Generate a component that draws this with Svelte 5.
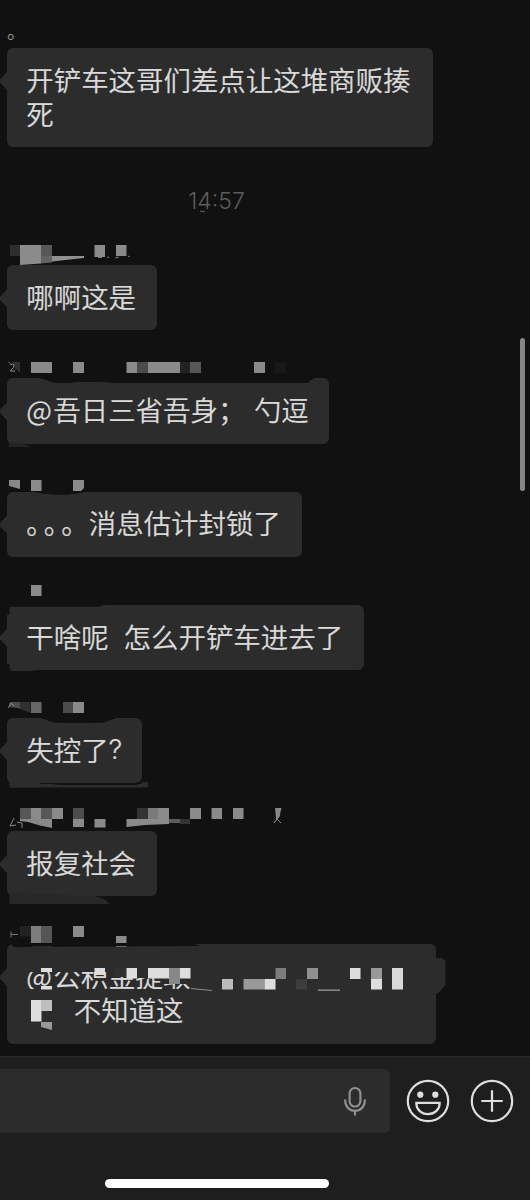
<script>
    const BG = '#111111';
    const BUBBLE = '#2c2c2c';

    // blocks: [x, y, width, height, color], shapes: [points, color], strokes: [path, color]
    // x is measured from the screen edge, y from the top of the bubble
    const messages = [
        {
            width: 426,
            gap: 0,
            lines: [[{ text: '开铲车这哥们差点让这堆商贩揍' }], [{ text: '死' }]],
        },
        {
            width: 150,
            gap: 53,
            lines: [[{ text: '哪啊这是' }]],
            blocks: [
                [10, -20, 10, 11, '#2e2e2e'],
                [41, -20, 11, 11, '#575757'],
                [94.5, -20, 10.5, 12, '#8a8a8a'],
                [116, -20, 10.5, 11, '#8a8a8a'],
            ],
            shapes: [
                ['20,-20 41,-20 41,-1.5 20,0', '#8b8b8b'],
                ['41,-9 52,-9 52,-2.5 41,-1.5', '#636363'],
                ['52,-9 84,-9 84,-7 52,-3.5', '#909090'],
            ],
            strokes: [['M98 -7.5h4M107 -8l2 .5M115 -7l4 -1M128 -9l2 1', '#777']],
        },
        {
            width: 322,
            gap: 48,
            lines: [[{ text: '@', width: 27 }, { text: '吾日三省吾身' }, { text: '；', width: 36 }, { text: '勺逗' }]],
            blocks: [
                [31, -16, 21, 11, '#8a8a8a'],
                [73, -16, 11, 11, '#8a8a8a'],
                [126.5, -16, 10.5, 11, '#8a8a8a'],
                [137, -16, 11, 11, '#4b4b4b'],
                [148, -16, 32, 11, '#8a8a8a'],
                [180, -16, 10, 11, '#222222'],
                [190, -16, 11, 11, '#575757'],
                [254, -16, 11, 11, '#8a8a8a'],
                [275, -16, 11, 11, '#181818'],
            ],
            shapes: [
                ['12,-16 20,-16 20,-5 14,-11', '#303030'],
                ['40,0 45,1.5 53,4.5 65,5 76,4 100,3.5 117,5 307,5 314,0 314,-1 40,-1', BG],
                ['9,64 24,66 31,69 9,69', '#242424'],
            ],
            strokes: [['M8.5 -16l2 1.5M10 -13q3 -2 4 0t-4 6h5', '#888']],
        },
        {
            width: 295,
            gap: 48,
            lines: [[
                { text: '。', width: 17.5, half: true },
                { text: '。', width: 17.5, half: true },
                { text: '。', width: 27.5, half: true },
                { text: '消息估计封锁了' },
            ]],
            blocks: [[31, -12, 10.5, 11, '#8a8a8a']],
            shapes: [
                ['9,-12 20,-12 20,-3 9,-6', '#888888'],
                ['73,-12 84,-12 84,-4 81,-1 73,-1', '#8a8a8a'],
                ['35,0 43,1.5 55,2.5 68,2.5 78,1 85,0 85,-1 35,-1', BG],
            ],
        },
        {
            width: 357,
            gap: 48,
            lines: [[{ text: '干啥呢' }, { text: '怎么开铲车进去了', indent: 15 }]],
            blocks: [
                [31, -20, 10.5, 11, '#8a8a8a'],
                [7, -1, 2.5, 11, BG],
                [7, 59, 2.5, 7, BG],
            ],
            shapes: [
                ['7,-1 107,-1 99,1.5 7,1.5', BG],
                ['10,65 38,65 30,66 10,66', BUBBLE],
            ],
        },
        {
            width: 135,
            gap: 48,
            lines: [[{ text: '失控了' }, { text: '?', latin: true }]],
            blocks: [
                [10, -16, 10, 11, '#4d4d4d'],
                [20, -16, 10.5, 11, '#303030'],
                [31, -16, 10.5, 11, '#666666'],
                [63, -16, 10, 11, '#4b4b4b'],
                [73, -16, 11, 11, '#8a8a8a'],
                [9.5, 61, 30, 8.5, BUBBLE],
                [9.5, 66, 138.5, 3.5, BUBBLE],
                [141, 64, 7, 4, BUBBLE],
            ],
            shapes: [
                ['10,-11 18,-10 30,-5 10,-5', BG],
                ['41,0 47,2 54,4.5 75,5 104,4.5 110,2 116,0 116,-1 41,-1', BG],
                ['44,65 60,66 135,65.5 142,63 142,65 136,67 60,67', BG],
            ],
            strokes: [['M8.5 -10l2 -5l4 3', '#888']],
        },
        {
            width: 150,
            gap: 48,
            lines: [[{ text: '报复社会' }]],
            blocks: [
                [20, -23, 11, 11, '#575757'],
                [31, -23, 10.5, 11, '#8a8a8a'],
                [41, -23, 11, 11, '#575757'],
                [52, -23, 11, 11, '#8a8a8a'],
                [73, -23, 11, 11, '#4d4d4d'],
                [73, -12, 11, 8, '#8a8a8a'],
                [94.5, -12, 11, 8.5, '#8a8a8a'],
                [137, -23, 11, 11, '#333333'],
                [148, -23, 10, 11, '#7a7a7a'],
                [158, -23, 11, 11, '#8a8a8a'],
                [169, -12, 11, 4, '#5c5c5c'],
                [180, -12, 10, 5, '#333333'],
                [190, -23, 11, 11, '#8a8a8a'],
                [211.5, -23, 10.5, 11, '#8a8a8a'],
                [233, -23, 10.5, 11, '#8a8a8a'],
            ],
            shapes: [
                ['20,-12 52,-12 52,-3 40,-5.5 28,-9 20,-10', '#888888'],
                ['126.5,-12 169,-12 169,-7 145,-6 126.5,-4', '#8a8a8a'],
                ['275,-23 281.5,-23 279,-13 276,-13', '#888888'],
                ['9.5,61 80,65 95,65 104,68 110,73 9.5,73', '#282828'],
            ],
            strokes: [
                ['M14 -13l-4 8l6 -1M17 -9l5 1v5', '#888'],
                ['M280 -16l-6 8M276 -13l5 5', '#888'],
            ],
        },
        {
            width: 429,
            gap: 48,
            lines: [
                [{ text: '@', width: 27 }, { text: '公积金提取' }],
                [{ text: '不知道这', indent: 47.5 }],
            ],
            blocks: [
                [20, -18, 11, 10.5, '#222222'],
                [31, -18, 10.5, 21, '#7d7d7d'],
                [41, -18, 11, 21, '#555555'],
                [73, -18, 11, 11, '#8a8a8a'],
                [116, -8, 10.5, 11, '#8a8a8a'],
                // the quoted name inside the bubble
                [26, 16, 186, 12, BUBBLE],
                [108, 24, 18, 9, BUBBLE],
                [126, 24, 86, 10, BUBBLE],
                [26, 45, 186, 5, BUBBLE],
                [163, 24, 51, 16, BUBBLE],
                [41, 24, 11, 4, '#dddddd'],
                [41, 42, 11, 3.5, '#dddddd'],
                [94.5, 24, 10.5, 7, '#dddddd'],
                [115, 24, 11, 9, '#303030'],
                [126.5, 24, 10.5, 10.5, '#dddddd'],
                [148, 24, 21, 10.5, '#dddddd'],
                [169, 24, 11, 16, '#888888'],
                [180, 24, 10.5, 10.5, '#dddddd'],
                [222, 35, 11, 10.5, '#bbbbbb'],
                [243.5, 35, 21, 10.5, '#999999'],
                [264.5, 35, 11, 10.5, '#dddddd'],
                [275.5, 24, 10.5, 11, '#7d7d7d'],
                [296, 35, 11, 10.5, '#3d3d3d'],
                [307, 24, 11, 11, '#919191'],
                [318, 45.5, 22, 1.3, '#999999'],
                [350, 24, 10.5, 11, '#dddddd'],
                [371, 24, 11, 11, '#999999'],
                [371, 35, 11, 10.5, '#dddddd'],
                [392, 24, 11, 21.5, '#d8d8d8'],
                [31, 56, 10.5, 21.5, '#dddddd'],
                [41, 56, 11, 11, '#bfbfbf'],
            ],
            shapes: [
                ['7,-1 191,-1 199,2 60,2.5 14,3 12,0 7,1', BG],
                ['429,14 442,14 445.5,17 445.5,41 438,49 429,49', BUBBLE],
                ['41,78 52,78 52,86 41,83', '#999999'],
            ],
            strokes: [
                ['M11 -12.5v6M11 -9.5h7', '#777'],
                ['M191 44.5l21 2', '#888'],
            ],
        },
    ];
</script>

<main class="screen">
    <section class="chat">
        <p class="tail">。</p>

        {#each messages as message, i}
            {#if i === 1}
                <time class="time">14:57<i></i></time>
            {/if}
            <article
                class="message"
                style:width="{message.width}px"
                style:margin-top="{message.gap}px"
            >
                {#each message.lines as line}
                    <div class="line">
                        {#each line as part}
                            <span
                                class:latin={part.latin}
                                class:half={part.half}
                                style:width={part.width ? `${part.width}px` : null}
                                style:margin-left={part.indent ? `${part.indent}px` : null}
                            >{part.text}</span>
                        {/each}
                    </div>
                {/each}
                <svg class="mosaic" width="530" height="110" aria-hidden="true">
                    {#each message.shapes ?? [] as [points, color]}
                        <polygon {points} fill={color} />
                    {/each}
                    {#each message.blocks ?? [] as [x, y, width, height, color]}
                        <rect {x} {y} {width} {height} fill={color} />
                    {/each}
                    <!-- background cuts go over the blocks -->
                    {#each (message.shapes ?? []).filter((shape) => shape[1] === BG) as [points, color]}
                        <polygon {points} fill={color} />
                    {/each}
                    {#each message.strokes ?? [] as [d, color]}
                        <path {d} stroke={color} fill="none" />
                    {/each}
                </svg>
            </article>
        {/each}
        <div class="scrollbar"></div>
    </section>

    <footer class="footer">
        <div class="toolbar">
            <div class="input">
                <svg width="24" height="32" viewBox="0 0 24 32" fill="none" stroke="#929292" stroke-width="2.1">
                    <rect x="6.6" y="3" width="10.8" height="18.5" rx="5.4" />
                    <path d="M2.2 14.5v1.5a9.8 9.8 0 0 0 19.6 0v-1.5M12 25.5v5" />
                </svg>
            </div>
            <button aria-label="Emoji">
                <svg width="44" height="44" viewBox="0 0 44 44" fill="none" stroke="#dedede" stroke-width="2.2">
                    <circle cx="22" cy="22" r="20.2" />
                    <circle cx="14.3" cy="15.7" r="3.1" fill="#dedede" stroke="none" />
                    <circle cx="29.3" cy="15.7" r="3.1" fill="#dedede" stroke="none" />
                    <path d="M10.3 23.9h23.4c0 6.4-4.8 11.2-11.7 11.2s-11.7-4.8-11.7-11.2z" />
                </svg>
            </button>
            <button aria-label="More">
                <svg width="44" height="44" viewBox="0 0 44 44" fill="none" stroke="#dedede" stroke-width="2.2">
                    <circle cx="22" cy="22" r="20.2" />
                    <path d="M22 11.3v21.4M11.3 22h21.4" />
                </svg>
            </button>
        </div>
        <div class="home"></div>
    </footer>
</main>

<style>
    :global(body) {
        margin: 0;
        background: #111111;
    }

    .screen {
        display: flex;
        flex-direction: column;
        width: 530px;
        height: 1200px;
        overflow: hidden;
        color: #dadada;
        font-family: "Noto Sans CJK SC", sans-serif;
        font-weight: 350;
    }

    .chat {
        position: relative;
        box-sizing: border-box;
        height: 1056px;
        background: #111111;
    }

    .tail {
        height: 48px;
        margin: 0;
        padding-left: 7px;
        box-sizing: border-box;
        font-size: 19px;
        line-height: 62px;
        color: #999;
    }

    .time {
        position: relative;
        display: block;
        height: 22px;
        margin: 43px 0 0;
        padding-right: 97px;
        text-align: center;
        font-family: Inter, sans-serif;
        font-size: 23px;
        line-height: 22px;
        color: #5c5c5c;
    }

    .time i {
        position: absolute;
        left: 200px;
        top: 21px;
        width: 5px;
        height: 1px;
        background: #666;
        transform: rotate(10deg);
    }

    .message {
        position: relative;
        box-sizing: border-box;
        margin-left: 7px;
        padding: 13.8px 0 17.4px 19.3px;
        border-radius: 6px;
        background: #2c2c2c;
        font-size: 27.45px;
        line-height: 34px;
        white-space: nowrap;
        -webkit-text-stroke: 0.2px #dadada;
    }

    .message::before {
        content: '';
        position: absolute;
        left: -7px;
        top: 24px;
        width: 7px;
        height: 18px;
        background: #2c2c2c;
        clip-path: polygon(100% 0, 0 42%, 0 58%, 100% 100%);
    }

    .line {
        display: flex;
        height: 34px;
    }

    .latin {
        font-family: Inter, sans-serif;
    }

    .half {
        font-feature-settings: "halt";
    }

    .mosaic {
        position: absolute;
        left: -7px;
        top: 0;
        overflow: visible;
        pointer-events: none;
    }

    .scrollbar {
        position: absolute;
        right: 5px;
        top: 338px;
        width: 5px;
        height: 153px;
        border-radius: 3px;
        background: #858585;
    }

    .footer {
        position: relative;
        box-sizing: border-box;
        height: 144px;
        padding-top: 12px;
        border-top: 1px solid #292929;
        background: #1e1e1e;
    }

    .toolbar {
        display: flex;
        align-items: center;
        height: 64px;
    }

    .input {
        display: flex;
        align-items: center;
        justify-content: flex-end;
        box-sizing: border-box;
        width: 389.5px;
        height: 64px;
        padding-right: 23px;
        border-radius: 0 6px 6px 0;
        background: #2c2c2c;
    }

    button {
        width: 44px;
        height: 44px;
        margin-left: 16.5px;
        padding: 0;
        border: 0;
        background: none;
    }

    button + button {
        margin-left: 19.5px;
    }

    button svg {
        display: block;
    }

    .home {
        width: 224px;
        height: 8.5px;
        margin: 46px 0 0 105px;
        border-radius: 5px;
        background: #ffffff;
    }
</style>
